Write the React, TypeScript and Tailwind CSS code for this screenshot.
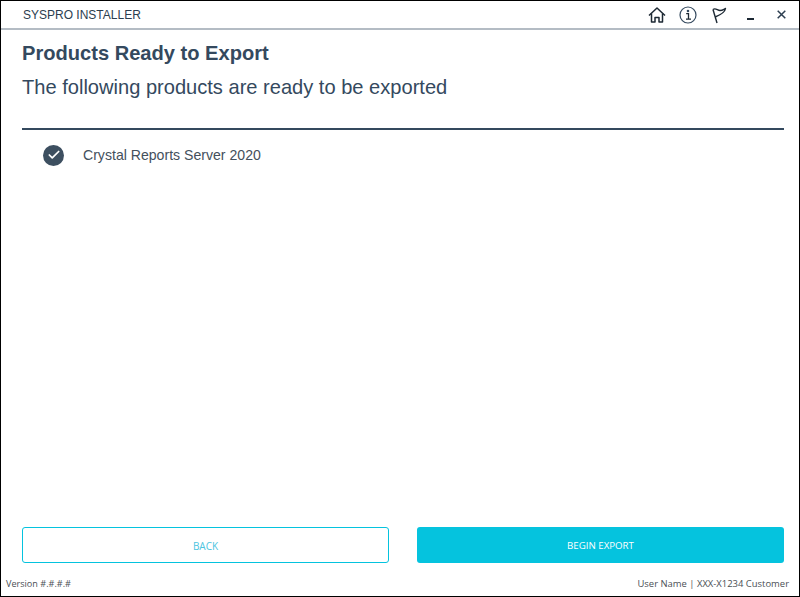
import { Check } from 'lucide-react';

export default function App() {
  return (
    <div className="flex h-[597px] w-[800px] flex-col border border-black bg-white font-['Liberation_Sans',sans-serif] text-[#34495e]">
      {/* Title bar */}
      <header className="flex h-[29px] shrink-0 items-center justify-between border-b-2 border-[#b4bcc4] pl-[22px]">
        <span className="text-[12px] leading-none text-[#2c3e50]">SYSPRO INSTALLER</span>
        <div className="flex items-center text-[#1c2833]">
          <svg width="18" height="18" viewBox="0 0 18 18" fill="none" stroke="currentColor" strokeWidth="1.5" strokeLinejoin="round" className="mr-[13px]">
            <path d="M1 9.5 9 2l8 7.5" />
            <path d="M3.5 7.5V16h3.5v-4.5h4V16h3.5V7.5" />
          </svg>
          <svg width="18" height="18" viewBox="0 0 18 18" fill="none" stroke="#34495e" strokeWidth="1.2" className="mr-[14px]">
            <circle cx="9" cy="9" r="8" />
            <circle cx="9" cy="5" r="0.7" fill="#1c2833" />
            <path d="M7.2 7.7H9.5V13M7 13.2h5" stroke="#1c2833" strokeWidth="1.3" />
          </svg>
          <svg width="16" height="18" viewBox="0 0 16 18" fill="none" stroke="currentColor" strokeWidth="1.4" strokeLinejoin="round" className="mr-[20px]">
            <path d="M6 17 2 3.500" />
            <path d="M2 3.500C4.500 1.500 6.500 4.500 9 4.500 11 4.500 12.500 3.500 14.500 2.500 14 6 10.500 8.500 4.200 11" />
          </svg>
          <span className="mr-[23px] mt-[9px] h-[1.500px] w-[7px] bg-[#1c2833]" />
          <svg width="9" height="9" viewBox="0 0 9 9" stroke="#2c3e50" strokeWidth="1.5" className="mr-[13px]">
            <path d="M.7.7l7.600 7.600M8.300.7.700 8.300" />
          </svg>
        </div>
      </header>

      {/* Page heading */}
      <main className="flex flex-1 flex-col pl-[21px] pr-[15px]">
        <h1 className="mt-[11px] text-[20.1px] font-bold leading-[24px]">Products Ready to Export</h1>
        <p className="mt-[10px] text-[20.08px] leading-[24px]">The following products are ready to be exported</p>
        <div className="mt-[29px] h-[2px] bg-[#34495e]" />

        <div className="mt-[14px] flex items-center pl-[21px]">
          <span className="flex h-[21px] w-[21px] items-center justify-center rounded-full bg-[#3d4f60]">
            <Check size={14} strokeWidth={3} className="text-white" />
          </span>
          <span className="ml-[19px] pt-[1px] text-[14.1px] leading-[21px] text-[#44505c]">Crystal Reports Server 2020</span>
        </div>

        <div className="mt-auto flex gap-[28px]">
          <button className="flex h-[36px] w-[367px] items-center justify-center rounded-[3px] border border-[#05c3de] pt-[2px] font-['Open_Sans',sans-serif] text-[10px] text-[#4cc4e0]">
            BACK
          </button>
          <button className="flex h-[36px] w-[367px] items-center justify-center rounded-[3px] bg-[#05c3de] pt-[2px] font-['Open_Sans',sans-serif] text-[9.7px] text-white">
            BEGIN EXPORT
          </button>
        </div>
      </main>

      {/* Status bar */}
      <footer className="flex h-[33px] shrink-0 items-center justify-between px-[5px] pt-[9px] font-['Open_Sans',sans-serif] text-[#4a4f55]">
        <span className="text-[9.1px]">Version #.#.#.#</span>
        <span className="pr-[5px] text-[9.45px]">User Name | XXX-X1234 Customer</span>
      </footer>
    </div>
  );
}
